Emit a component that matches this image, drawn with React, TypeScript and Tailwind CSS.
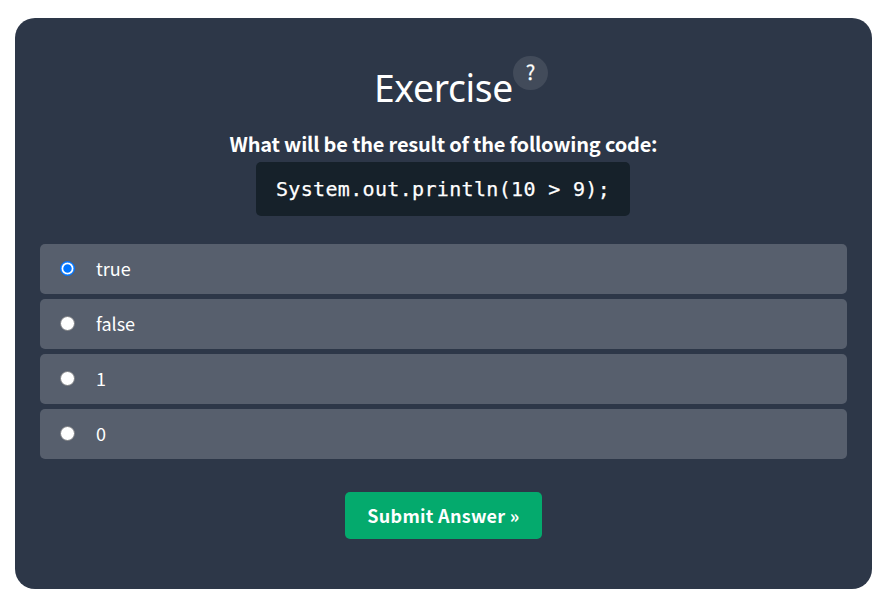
import { useState } from "react";

const options = ["true", "false", "1", "0"];

export default function App() {
  const [selected, setSelected] = useState("true");

  return (
    <main className="h-[602px] w-[882px] bg-white pt-[18px] pl-[15px] font-['Noto_Sans_CJK_SC',sans-serif] text-white">
      <section className="flex h-[571px] w-[857px] flex-col items-center rounded-[20px] bg-[#2d3748] px-[25px] pt-[38px]">
        <div className="flex h-[68px] items-start pl-[36px]">
          <h1 className="mt-[3px] -ml-px mr-px w-[138px] origin-left scale-x-[0.955] text-[39px] leading-[56px] tracking-[-0.35px] whitespace-nowrap font-['Noto_Sans',sans-serif]">
            Exercise
          </h1>
          <button className="h-[34px] w-[35px] rounded-full bg-[#424b5a] pb-[2px] text-[20px] leading-[32px] [-webkit-text-stroke:0.25px_white]">
            ?
          </button>
        </div>
        <p className="h-[38px] text-[20px] leading-[40px] font-bold tracking-[-0.2px] whitespace-nowrap">
          What will be the result of the following code:
        </p>
        <pre className="mr-px h-[54px] w-[374px] rounded-[5px] bg-[#16212a] pl-[20px] text-[20px] leading-[54px] tracking-[0.33px] font-['DejaVu_Sans_Mono',monospace] [-webkit-text-stroke:0.25px_white]">
          System.out.println(10 &gt; 9);
        </pre>
        <form
          className="mt-[28px] flex w-full flex-col items-center"
          onSubmit={(e) => e.preventDefault()}
        >
          <div className="flex w-full flex-col gap-[5px]">
            {options.map((option) => (
              <label
                key={option}
                className="flex h-[50px] items-center rounded-[5px] bg-[#575f6d] pl-[20px] text-[18px]"
              >
                <input
                  type="radio"
                  name="answer"
                  checked={selected === option}
                  onChange={() => setSelected(option)}
                  className="mr-[21px] mb-px size-[15px] shrink-0 appearance-none rounded-full border border-[#7b7d81] bg-white checked:border-[#0075ff] checked:bg-[#0075ff] checked:shadow-[inset_0_0_0_0.5px_#0075ff,inset_0_0_0_2.25px_white]"
                />
                <span className="h-[50px] leading-[48px]">{option}</span>
              </label>
            ))}
          </div>
          <button className="mt-[33px] h-[47px] w-[197px] rounded-[5px] bg-[#04aa6d] text-[18px] leading-[47px] font-bold tracking-[0.28px] whitespace-nowrap">
            Submit Answer »
          </button>
        </form>
      </section>
    </main>
  );
}
